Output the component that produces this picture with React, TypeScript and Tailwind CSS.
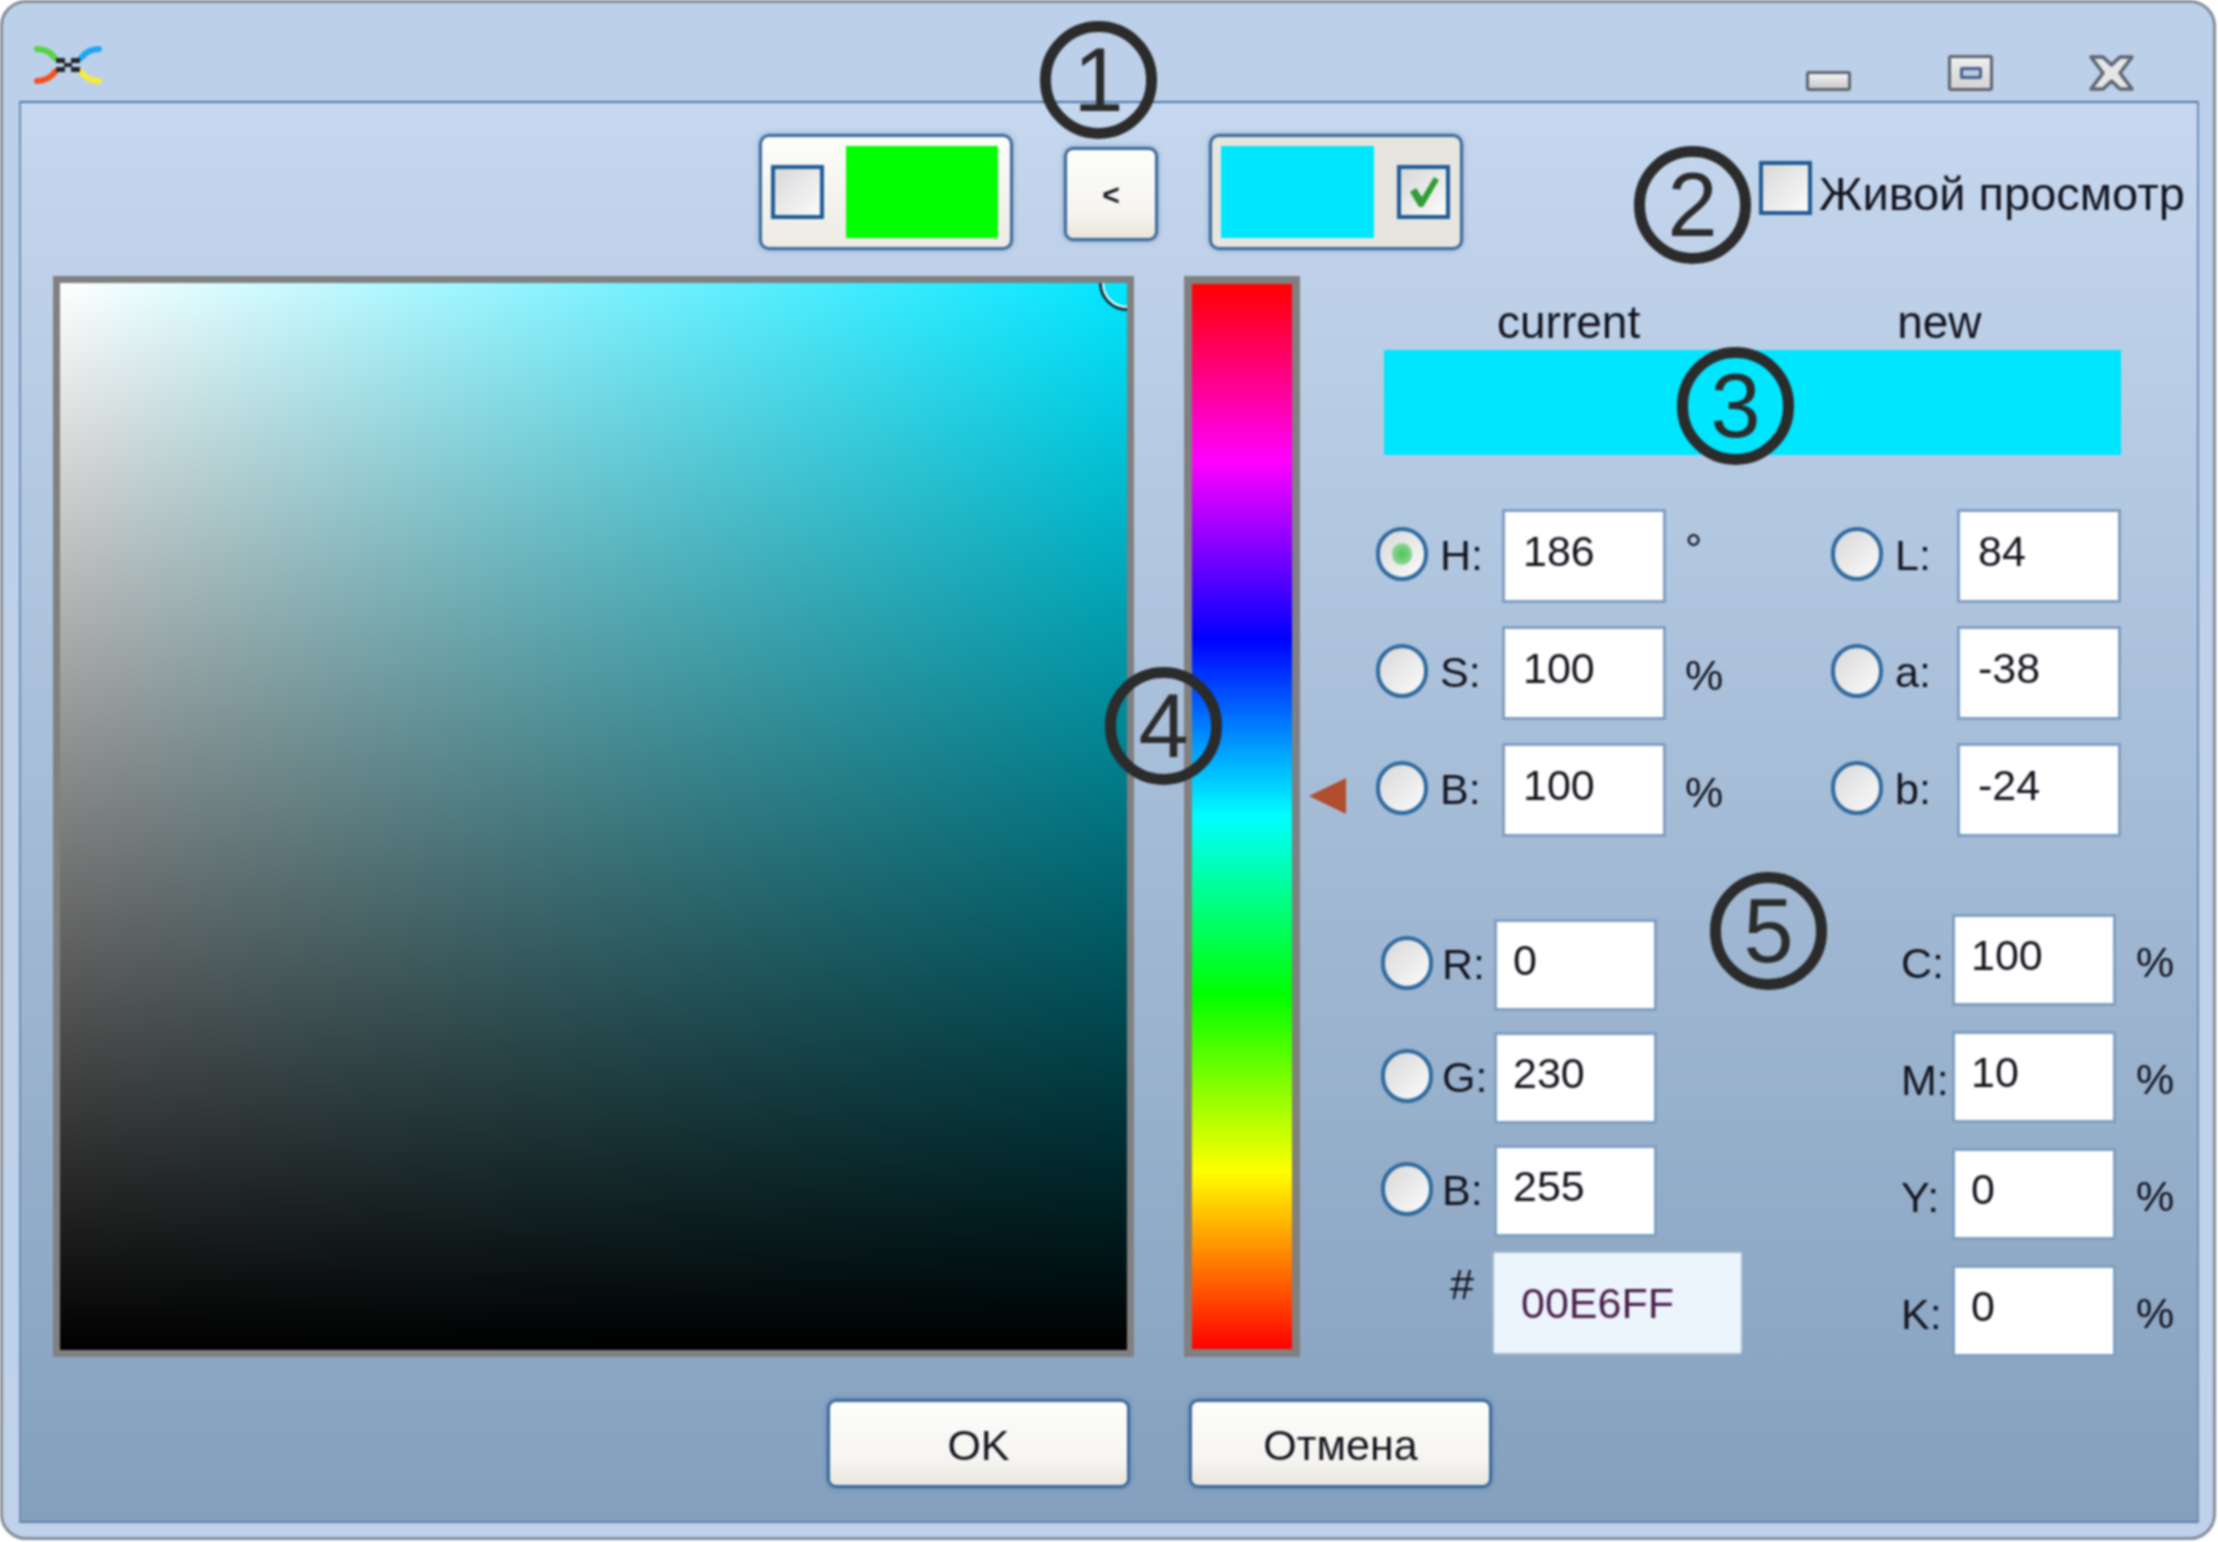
import { ReactNode } from "react";

const callouts = [
  { n: "1", pos: "left-[1040px] top-[21px]" },
  { n: "2", pos: "left-[1634px] top-[146px]" },
  { n: "3", pos: "left-[1677px] top-[347px]" },
  { n: "4", pos: "left-[1105px] top-[667px]" },
  { n: "5", pos: "left-[1710px] top-[872px]" },
];

function CheckBox({ checked }: { checked?: boolean }) {
  return (
    <div className="flex h-[54px] w-[53px] shrink-0 items-center justify-center border-[4px] border-[#1f5a94] bg-[linear-gradient(135deg,#d8d8d8,#fbfbfb)]">
      {checked && (
        <svg width="34" height="36" viewBox="0 0 34 36">
          <path d="M3 18 L9 14 L15 23 L27 3 L32 6 L16 33 L12 33 Z" fill="#2e9e35" />
        </svg>
      )}
    </div>
  );
}

function Radio({ selected }: { selected?: boolean }) {
  return (
    <div className="mb-[4px] flex h-[54px] w-[52px] shrink-0 items-center justify-center rounded-full border-[4px] border-[#2f6a9e] bg-[linear-gradient(135deg,#d8d8d8,#fbfbfb)]">
      {selected && <div className="h-[22px] w-[20px] rounded-full bg-[radial-gradient(circle,#4fc45a,#a9dcae)]" />}
    </div>
  );
}

function Field({ value, className }: { value: string; className: string }) {
  return (
    <input
      readOnly
      value={value}
      className={`shrink-0 border-[3px] border-[#7f9fc2] bg-white pb-[10px] text-[#14141e] outline-none ${className}`}
    />
  );
}

function HsbRow({ radio, label, value, unit, selected }: { radio?: boolean; label: string; value: string; unit?: string; selected?: boolean }) {
  return (
    <div className="flex h-[94px] w-[455px] items-center">
      {radio && <Radio selected={selected} />}
      <span className="mb-[2px] w-[74px] pl-[12px]">{label}</span>
      <Field value={value} className="h-[94px] w-[164px] pl-[18px]" />
      {unit && <span className={`ml-[19px] ${unit === "°" ? "-mt-[14px]" : "mt-[4px]"}`}>{unit}</span>}
    </div>
  );
}

function RgbRow({ label, value }: { label: string; value: string }) {
  return (
    <div className="flex h-[92px] items-center">
      <Radio />
      <span className="mb-[2px] w-[61px] pl-[9px]">{label}</span>
      <Field value={value} className="h-[92px] w-[163px] pb-[6px] pl-[16px]" />
    </div>
  );
}

function CmykRow({ label, value }: { label: string; value: string }) {
  return (
    <div className="flex h-[92px] items-center">
      <span className="mt-[6px] w-[51px]">{label}</span>
      <Field value={value} className="h-[92px] w-[164px] pl-[16px]" />
      <span className="ml-[20px] mt-[4px]">%</span>
    </div>
  );
}

function PushButton({ children, className }: { children: ReactNode; className: string }) {
  return (
    <button className={`rounded-[9px] border-[3px] border-[#3b6a9c] bg-[linear-gradient(#fdfdfc,#f6f5f1_70%,#e9e5dc)] text-[#14141e] shadow-[0_0_5px_rgba(60,100,150,0.6)] ${className}`}>
      {children}
    </button>
  );
}

function AppLogo() {
  return (
    <svg width="68" height="40" viewBox="0 0 68 40" fill="none" strokeLinecap="round">
      <path d="M3 4 Q14 4 21 13" stroke="#55d445" strokeWidth="6" />
      <path d="M65 4 Q54 4 47 13" stroke="#1da6f5" strokeWidth="6" />
      <path d="M3 36 Q14 36 21 27" stroke="#f2501e" strokeWidth="6" />
      <path d="M65 36 Q54 36 47 27" stroke="#f7ec3a" strokeWidth="6" />
      <path d="M22 13 H31 V18 H37 V13 H46 V18 H38 V22 H46 V27 H37 V22 H31 V27 H22 V22 H30 V18 H22 Z" fill="#23262b" />
    </svg>
  );
}

function WindowButtons() {
  return (
    <div className="flex items-end">
      <div className="h-[20px] w-[45px] rounded-[3px] border-[3px] border-[#5e6573] bg-[linear-gradient(#f2f2f2,#c9c9c9)]" />
      <div className="ml-[97px] flex h-[36px] w-[45px] items-center justify-center rounded-[3px] border-[3px] border-[#5e6573] bg-[linear-gradient(#eeeeee,#d4d4d4)]">
        <div className="h-[12px] w-[22px] rounded-[2px] border-[3px] border-[#47608a] bg-[#b9c9e0]" />
      </div>
      <svg className="ml-[96px]" width="45" height="36" viewBox="0 0 45 36">
        <path d="M2 2 H14 L22.5 10 L31 2 H43 L31 18 L43 34 H31 L22.5 26 L14 34 H2 L14 18 Z" fill="#e6e6e6" stroke="#5e6573" strokeWidth="3.5" strokeLinejoin="round" />
      </svg>
    </div>
  );
}

export default function App() {
  return (
    <div className="relative h-[1542px] w-[2218px] overflow-hidden bg-white font-['Liberation_Sans',Arial,sans-serif] text-[43px] leading-none text-[#14141e] blur-[0.8px]">
      <div className="flex h-[1540px] w-[2216px] flex-col rounded-[26px] border-[3px] border-[#858e98] bg-[linear-gradient(#bdd0e9,#bfd2ea)] pl-[16px]">
        {/* title bar */}
        <div className="flex h-[98px] shrink-0 items-start justify-between pr-[79px]">
          <div className="ml-[15px] mt-[42px]">
            <AppLogo />
          </div>
          <div className="mt-[52px]">
            <WindowButtons />
          </div>
        </div>

        <div className="flex h-[1422px] w-[2180px] flex-col border-[2px] border-[#6f90b6] border-t-[#4d78a6] border-b-[#5e80a6] bg-[linear-gradient(#c6d8ef,#84a0be)]">
          {/* swatches */}
          <div className="flex h-[173px] shrink-0 items-start pt-[31px]">
            <div className="ml-[738px] flex h-[116px] w-[254px] items-center justify-between rounded-[10px] border-[3px] border-[#3b6a9c] bg-[linear-gradient(#fdfdfb,#ecebe4)] pl-[9px] pr-[12px] shadow-[0_0_5px_rgba(60,100,150,0.5)]">
              <CheckBox />
              <div className="h-[92px] w-[152px] bg-[#00ff00]" />
            </div>
            <PushButton className="ml-[51px] mt-[13px] flex h-[94px] w-[94px] items-center justify-center pt-[2px] text-[30px] font-bold">
              &lt;
            </PushButton>
            <div className="ml-[51px] flex h-[116px] w-[254px] items-center justify-between rounded-[10px] border-[3px] border-[#3b6a9c] bg-[#e6e6df] pl-[9px] pr-[10px] shadow-[0_0_5px_rgba(60,100,150,0.5)]">
              <div className="h-[92px] w-[153px] bg-[#00e6ff]" />
              <CheckBox checked />
            </div>
            <div className="ml-[296px] mt-[27px]">
              <CheckBox />
            </div>
            <span className="ml-[7px] mt-[36px] whitespace-nowrap text-[47px]">Живой просмотр</span>
          </div>

          {/* picker, hue bar and values */}
          <div className="flex h-[1081px] shrink-0">
            <div className="ml-[32px] h-[1081px] w-[1081px] shrink-0 border-[7px] border-[#808080]">
              <div className="relative h-full w-full overflow-hidden bg-[linear-gradient(to_top,#000,transparent),linear-gradient(to_right,#fff,#00e6ff)]">
                <div className="absolute right-[-28px] top-[-28px] h-[56px] w-[56px] rounded-full border-[3px] border-[#0c2a33]">
                  <div className="h-full w-full rounded-full border-[2px] border-white" />
                </div>
              </div>
            </div>

            <div className="relative ml-[50px] h-[1081px] w-[116px] shrink-0 border-[8px] border-[#808080]">
              <div className="h-full w-full bg-[linear-gradient(#f00,#f0f,#00f,#0ff,#0f0,#ff0,#f00)]" />
              <svg className="absolute left-[117px] top-[494px]" width="37" height="36" viewBox="0 0 37 36">
                <path d="M0 18 L37 0 V36 Z" fill="#b04e2f" />
              </svg>
            </div>

            <div className="-ml-px flex flex-col">
              <div className="flex h-[74px] items-start pt-[23px] text-[46px]">
                <span className="ml-[198px]">current</span>
                <span className="ml-[257px]">new</span>
              </div>
              <div className="ml-[85px] h-[105px] w-[737px] bg-[#00e6ff]" />

              <div className="ml-[77px] mt-[54px] grid grid-cols-[455px_455px] gap-y-[23px]">
                <HsbRow radio selected label="H:" value="186" unit="°" />
                <HsbRow radio label="L:" value="84" />
                <HsbRow radio label="S:" value="100" unit="%" />
                <HsbRow radio label="a:" value="-38" />
                <HsbRow radio label="B:" value="100" unit="%" />
                <HsbRow radio label="b:" value="-24" />
              </div>

              <div className="ml-[82px] mt-[77px] flex">
                <div className="mt-[5px] flex w-[520px] flex-col gap-y-[21px]">
                  <RgbRow label="R:" value="0" />
                  <RgbRow label="G:" value="230" />
                  <RgbRow label="B:" value="255" />
                  <div className="-mt-[5px] flex items-start">
                    <span className="ml-[69px] mt-[10px] w-[44px]">#</span>
                    <input
                      readOnly
                      value="00E6FF"
                      className="h-[100px] w-[247px] bg-[#ecf4fc] pl-[27px] text-[#4a1f4c] shadow-[0_0_3px_rgba(255,255,255,0.6)] outline-none"
                    />
                  </div>
                </div>
                <div className="flex flex-col gap-y-[25px]">
                  <CmykRow label="C:" value="100" />
                  <CmykRow label="M:" value="10" />
                  <CmykRow label="Y:" value="0" />
                  <CmykRow label="K:" value="0" />
                </div>
              </div>
            </div>
          </div>

          {/* footer buttons */}
          <div className="flex pl-[806px] pt-[42px]">
            <PushButton className="h-[89px] w-[303px] pt-[4px]">OK</PushButton>
            <PushButton className="ml-[59px] h-[89px] w-[303px] pt-[4px]">Отмена</PushButton>
          </div>
        </div>
      </div>

      {callouts.map((c) => (
        <div
          key={c.n}
          className={`absolute flex h-[118px] w-[117px] items-center justify-center rounded-full border-[11px] border-[#2b2b2b] text-[90px] font-normal text-[#2b2b2b] ${c.pos}`}
        >
          {c.n}
        </div>
      ))}
    </div>
  );
}
